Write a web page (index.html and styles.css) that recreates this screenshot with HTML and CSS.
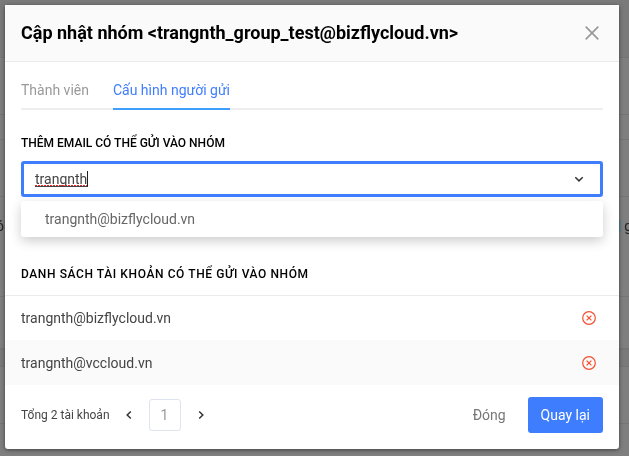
FILE: index.html
```html
<!DOCTYPE html>
<html lang="vi">
<head>
<meta charset="utf-8">
<meta name="viewport" content="width=device-width, initial-scale=1">
<title>Cập nhật nhóm</title>
<link rel="stylesheet" href="styles.css">
</head>
<body>
<div class="page" aria-hidden="true">
  <div class="band band-dark"></div>
  <div class="band band-tall"></div>
  <div class="band band-short"></div>
  <div class="band band-tall"></div>
  <div class="band band-text"><span>ó</span><span>g</span></div>
  <div class="band band-mid"></div>
  <div class="band band-strip"></div>
  <div class="band band-tall"></div>
  <div class="band band-last"></div>
</div>

<main class="modal" role="dialog" aria-labelledby="title">
  <header class="modal-header">
    <h1 id="title">Cập nhật nhóm &lt;trangnth_group_test@bizflycloud.vn&gt;</h1>
    <button class="icon-button" type="button" aria-label="Đóng">
      <svg width="14" height="14" viewBox="0 0 14 14"><path d="M.7.7l12.600 12.600M13.300.7L.7 13.300" fill="none" stroke="#999" stroke-width="1.700"/></svg>
    </button>
  </header>

  <section class="config">
    <nav class="tabs">
      <a class="tab" href="#members">Thành viên</a>
      <a class="tab active" href="#senders">Cấu hình người gửi</a>
    </nav>
    <label class="label" for="email">THÊM EMAIL CÓ THỂ GỬI VÀO NHÓM</label>
    <div class="combo">
      <div class="field">
        <input id="email" type="text" value="trangnth" spellcheck="false" autocomplete="off">
        <span class="typing"></span>
        <svg width="16" height="16" viewBox="0 0 16 16"><path d="M4.300 6.300L8 9.900l3.700-3.600" fill="none" stroke="#333" stroke-width="1.500"/></svg>
      </div>
      <ul class="options">
        <li><button class="option" type="button">trangnth@bizflycloud.vn</button></li>
      </ul>
    </div>
  </section>

  <table class="accounts">
    <thead>
      <tr><th colspan="2" scope="col">DANH SÁCH TÀI KHOẢN CÓ THỂ GỬI VÀO NHÓM</th></tr>
    </thead>
    <tbody>
      <tr>
        <td>trangnth@bizflycloud.vn</td>
        <td class="action"><button class="icon-button" type="button" aria-label="Xóa trangnth@bizflycloud.vn">
          <svg width="14" height="14" viewBox="0 0 14 14" fill="none" stroke="#f2502f" stroke-width="1.200"><circle cx="7" cy="7" r="6.300"/><path d="M4.600 4.600l4.800 4.800M9.400 4.600L4.600 9.400"/></svg>
        </button></td>
      </tr>
      <tr>
        <td>trangnth@vccloud.vn</td>
        <td class="action"><button class="icon-button" type="button" aria-label="Xóa trangnth@vccloud.vn">
          <svg width="14" height="14" viewBox="0 0 14 14" fill="none" stroke="#f2502f" stroke-width="1.200"><circle cx="7" cy="7" r="6.300"/><path d="M4.600 4.600l4.800 4.800M9.400 4.600L4.600 9.400"/></svg>
        </button></td>
      </tr>
    </tbody>
  </table>

  <footer class="modal-footer">
    <span class="total">Tổng 2 tài khoản</span>
    <div class="pager">
      <button class="icon-button" type="button" aria-label="Trang trước">
        <svg width="8" height="10" viewBox="0 0 8 10"><path d="M5.800 1.500L2.200 5l3.600 3.500" fill="none" stroke="#333" stroke-width="1.500"/></svg>
      </button>
      <button class="page-number" type="button">1</button>
      <button class="icon-button" type="button" aria-label="Trang sau">
        <svg width="8" height="10" viewBox="0 0 8 10"><path d="M2.200 1.500L5.800 5 2.200 8.500" fill="none" stroke="#333" stroke-width="1.500"/></svg>
      </button>
    </div>
    <div class="actions">
      <button class="button" type="button">Đóng</button>
      <button class="button primary" type="button">Quay lại</button>
    </div>
  </footer>
</main>
</body>
</html>
```

FILE: styles.css
```css
* {
  box-sizing: border-box;
}

body {
  margin: 0;
  padding: 5px 10px 7px 5px;
  min-height: 100vh;
  background: #7f7f7f;
  color: #444;
  font: 14px/20px Roboto, sans-serif;
}

button,
input {
  font: inherit;
  color: inherit;
  border: 0;
  padding: 0;
  background: none;
}

svg {
  display: block;
}

.icon-button {
  display: block;
}

.page {
  position: fixed;
  inset: 0;
  display: flex;
  flex-direction: column;
  z-index: -1;
}

.band {
  flex: none;
  height: 58px;
  border-bottom: 1px solid #757575;
}

.band-dark {
  background: #7a7a7a;
}

.band-tall {
  height: 57px;
}

.band-short {
  height: 25px;
}

.band-text {
  height: 100px;
  display: flex;
  align-items: flex-start;
  justify-content: space-between;
  padding-top: 23px;
  color: #222;
  line-height: 12px;
}

.band-text span:first-child {
  margin-left: -4px;
}

.band-text span:last-child {
  margin-right: -3px;
  padding-left: 3px;
  border-left: 2px solid #5b8390;
}

.band-mid {
  height: 53px;
  border-bottom-width: 2px;
}

.band-strip {
  height: 17px;
  background: #7a7a7a;
}

.band-last {
  flex: 1;
  border: 0;
}

.modal {
  background: #fff;
  border-radius: 3px;
  box-shadow: 0 1px 4px rgba(0, 0, 0, 0.5);
}

.modal-header {
  display: flex;
  align-items: center;
  justify-content: space-between;
  height: 57px;
  padding: 0 20px 0 16px;
  background: #fafafa;
  border-bottom: 1px solid #ebebeb;
}

h1 {
  margin: 0;
  color: #000;
  font-size: 18px;
  line-height: 24px;
  font-weight: 700;
}

.config {
  padding: 14px 16px 0;
}

.tabs {
  display: flex;
  gap: 24px;
  border-bottom: 2px solid #eee;
}

.tab {
  margin-bottom: -2px;
  padding: 4px 0 8px;
  border-bottom: 2px solid transparent;
  color: #999;
  text-decoration: none;
}

.tab.active {
  color: #3f7dff;
  border-color: #409eff;
}

.label {
  display: block;
  margin: 23px 0 8px;
  color: #000;
  font-size: 12px;
  font-weight: 500;
}

.combo {
  display: grid;
  gap: 4px;
}

.field {
  position: relative;
  display: flex;
  align-items: center;
  height: 36px;
  padding: 0 13px 0 11px;
  border: 3px solid #3f7dff;
  border-radius: 3px;
}

.field input {
  flex: 1;
  min-width: 0;
  outline: 0;
}

/* Composition underline, spelling marks and caret */
.typing {
  position: absolute;
  left: 11px;
  top: 7px;
  width: 53px;
  height: 16px;
  border-right: 1px solid #222;
  border-bottom: 1px solid #444;
  background: repeating-linear-gradient(90deg, #e22 0 2px, transparent 2px 3px) bottom / 100% 1px no-repeat;
}

.options {
  margin: 0;
  padding: 0;
  list-style: none;
  background: #fff;
  border-radius: 3px;
  box-shadow: 0 4px 12px rgba(0, 0, 0, 0.2);
}

.option {
  display: block;
  width: 100%;
  height: 36px;
  padding: 0 24px;
  color: #666;
  text-align: left;
}

.accounts {
  width: 100%;
  margin-top: 16px;
  border-spacing: 0;
}

th {
  height: 42px;
  padding: 0 16px;
  color: #000;
  font-size: 12px;
  font-weight: 500;
  letter-spacing: 0.05em;
  text-align: left;
}

td {
  height: 45px;
  padding: 0 16px;
}

tbody tr:first-child td {
  border-top: 1px solid #ebebeb;
}

td.action {
  width: 52px;
  padding: 0 23px 0 15px;
}

tbody tr:nth-child(even) {
  background: #fafafa;
}

.modal-footer {
  display: flex;
  align-items: center;
  height: 64px;
  padding: 0 16px 4px;
}

.total {
  font-size: 12px;
}

.pager {
  display: flex;
  align-items: center;
  gap: 16px;
  margin-left: 15px;
}

.page-number {
  width: 32px;
  height: 32px;
  border: 1px solid #dfe3ee;
  border-radius: 3px;
  color: #999;
}

.actions {
  display: flex;
  gap: 9px;
  margin-left: auto;
}

.button {
  height: 36px;
  padding: 0 13px;
  border-radius: 3px;
  color: #777;
}

.primary {
  background: #3f7dff;
  color: #fff;
}
```
